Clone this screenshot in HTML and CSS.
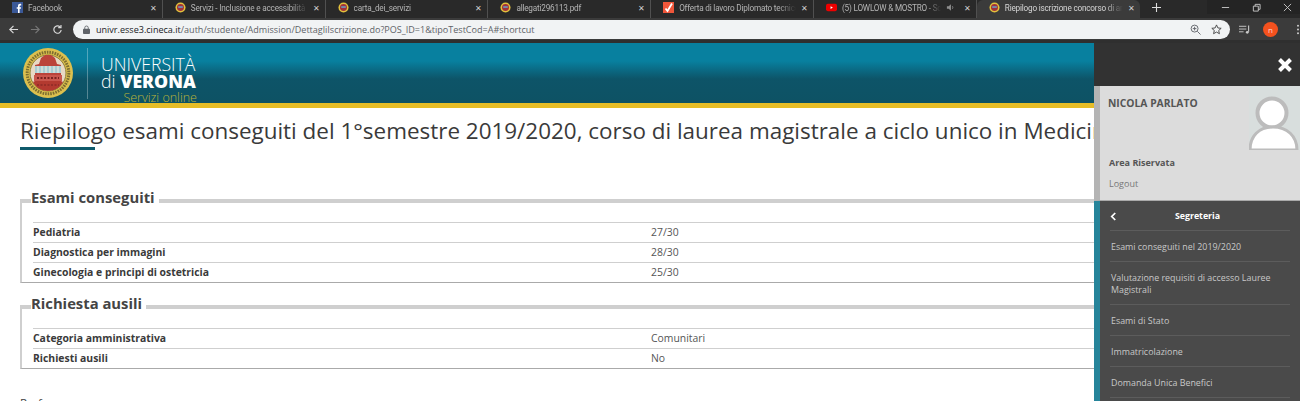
FILE: index.html
```html
<!DOCTYPE html>
<html lang="it">
<head>
<meta charset="utf-8">
<title>Riepilogo iscrizione concorso</title>
<link rel="stylesheet" href="styles.css">
</head>
<body>
<div class="tabbar">
  <div class="tab">
    <svg class="fav" viewBox="0 0 11 11"><rect width="11" height="11" fill="#3b5998"/><path d="M7.6 11V6.8h1.3l.2-1.6H7.6v-1c0-.5.2-.8.8-.8h.8V1.900C9 1.900 8.600 1.800 8 1.800c-1.200 0-2 .7-2 2.100v1.300H4.700v1.600H6V11z" fill="#fff"/></svg>
    <span class="tab-t">Facebook</span><span class="tab-x">✕</span>
  </div>
  <div class="tab">
    <svg class="fav" viewBox="0 0 12 12"><circle cx="6" cy="6" r="5.500" fill="#e3c23c"/><circle cx="6" cy="6" r="3.800" fill="#a2313a"/><rect x="3.500" y="4.500" width="5" height="2" fill="#6f8fb0"/></svg>
    <span class="tab-t">Servizi - Inclusione e accessibilità</span><span class="tab-x">✕</span>
  </div>
  <div class="tab">
    <svg class="fav" viewBox="0 0 12 12"><circle cx="6" cy="6" r="5.500" fill="#e3c23c"/><circle cx="6" cy="6" r="3.800" fill="#a2313a"/><rect x="3.500" y="4.500" width="5" height="2" fill="#6f8fb0"/></svg>
    <span class="tab-t">carta_dei_servizi</span><span class="tab-x">✕</span>
  </div>
  <div class="tab">
    <svg class="fav" viewBox="0 0 12 12"><circle cx="6" cy="6" r="5.500" fill="#e3c23c"/><circle cx="6" cy="6" r="3.800" fill="#a2313a"/><rect x="3.500" y="4.500" width="5" height="2" fill="#6f8fb0"/></svg>
    <span class="tab-t">allegati296113.pdf</span><span class="tab-x">✕</span>
  </div>
  <div class="tab">
    <svg class="fav" viewBox="0 0 11 11"><rect width="11" height="11" fill="#f0563a"/><path d="M2.500 6.500l2 2.500L9 1.500" fill="none" stroke="#fff" stroke-width="1.800"/></svg>
    <span class="tab-t">Offerta di lavoro Diplomato tecnico</span><span class="tab-x">✕</span>
  </div>
  <div class="tab">
    <svg class="fav" viewBox="0 0 12 12"><rect y="2" width="12" height="8" rx="2" fill="#e00"/><path d="M5 4.500v3L7.500 6z" fill="#fff"/></svg>
    <span class="tab-t">(5) LOWLOW &amp; MOSTRO - Sole</span>
    <svg class="spk" viewBox="0 0 10 10"><path d="M1 3.500h2L5.500 1.500v7L3 6.500H1z" fill="#8d8d8d"/><path d="M7 3.500c.8 1 .8 2 0 3" fill="none" stroke="#8d8d8d"/></svg>
    <span class="tab-x">✕</span>
  </div>
  <div class="tab tab-active">
    <svg class="fav" viewBox="0 0 12 12"><circle cx="6" cy="6" r="5.500" fill="#e3c23c"/><circle cx="6" cy="6" r="3.800" fill="#a2313a"/><rect x="3.500" y="4.500" width="5" height="2" fill="#6f8fb0"/></svg>
    <span class="tab-t">Riepilogo iscrizione concorso di ammissione</span><span class="tab-x">✕</span>
  </div>
  <div class="newtab">
    <svg viewBox="0 0 10 10"><path d="M5 0v10M0 5h10" stroke="#ddd" stroke-width="1.200"/></svg>
  </div>
  <div class="winctl">
    <span class="win"><svg viewBox="0 0 10 10"><path d="M1 5h8" stroke="#ccc"/></svg></span>
    <span class="win"><svg viewBox="0 0 10 10"><path d="M1.500 3.500h5.500v5.500H1.500zM3.500 3.500V1.500H9V7H7" fill="none" stroke="#ccc"/></svg></span>
    <span class="win"><svg viewBox="0 0 10 10"><path d="M1 1l8 8M9 1l-8 8" stroke="#ccc"/></svg></span>
  </div>
</div>

<div class="toolbar">
  <svg class="nav" viewBox="0 0 12 12"><path d="M11 6H2M6 2L2 6l4 4" fill="none" stroke="#d8d8d8" stroke-width="1.300"/></svg>
  <svg class="nav nav-off" viewBox="0 0 12 12"><path d="M1 6h9M6 2l4 4-4 4" fill="none" stroke="#777" stroke-width="1.300"/></svg>
  <svg class="nav" viewBox="0 0 12 12"><path d="M10 6.500A4 4 0 1 1 8.800 3.200M9.800 1v3h-3" fill="none" stroke="#d8d8d8" stroke-width="1.300"/></svg>
  <div class="omni">
    <svg class="lock" viewBox="0 0 8 10"><rect y="4" width="8" height="6" rx="1" fill="#5f6368"/><path d="M2 4.500V3a2 2 0 0 1 4 0v1.500" fill="none" stroke="#5f6368"/></svg>
    <span class="url"><span class="url-host">univr.esse3.cineca.it</span>/auth/studente/Admission/DettagliIscrizione.do?POS_ID=1&amp;tipoTestCod=A#shortcut</span>
    <svg class="omni-ic" viewBox="0 0 12 12"><circle cx="5" cy="5" r="3.800" fill="none" stroke="#5f6368"/><path d="M8 8l3.500 3.500M3 5h4M5 3v4" stroke="#5f6368"/></svg>
    <svg class="omni-ic" viewBox="0 0 12 12"><path d="M6 1l1.500 3.300 3.600.4-2.700 2.400.8 3.500L6 8.800l-3.200 1.800.8-3.500L.9 4.700l3.600-.4z" fill="none" stroke="#444"/></svg>
  </div>
  <div class="tools">
    <svg class="tool" viewBox="0 0 12 12"><path d="M0 2.500h8M0 5.500h8M0 8.500h5" stroke="#ccc"/><path d="M10.500 1.500v7" stroke="#ccc" stroke-width="1.200"/><circle cx="9" cy="9" r="1.500" fill="#ccc"/></svg>
    <span class="avatar">n</span>
    <svg class="dots" viewBox="0 0 4 12"><circle cx="2" cy="2" r="1.100" fill="#ccc"/><circle cx="2" cy="6" r="1.100" fill="#ccc"/><circle cx="2" cy="10" r="1.100" fill="#ccc"/></svg>
  </div>
</div>

<div class="page">
  <header class="hero">
    <svg class="seal" viewBox="0 0 50 50">
      <circle cx="25" cy="25" r="25" fill="#dcc04e"/>
      <circle cx="25" cy="25" r="20.800" fill="none" stroke="#7d6e30" stroke-width="3" stroke-dasharray="1.600 1"/>
      <circle cx="25" cy="25" r="18" fill="#e8d9c4" stroke="#8f7f33"/>
      <path d="M10 34c4-3 26-3 30 0-3 6-9 9-15 9s-12-3-15-9z" fill="#b33a30"/>
      <path d="M12 27V17l4-1 2-6 4-3 6 0 4 3 2 6 4 1v10z" fill="#bb443a"/>
      <rect x="12" y="18" width="26" height="7" fill="#a9cdd2"/>
      <path d="M15 18v7M19 18v7M23 18v7M27 18v7M31 18v7M35 18v7" stroke="#f2efe0"/>
      <path d="M11 27h28v6H11z" fill="#c9574d"/>
      <path d="M14 30h22" stroke="#7a2320" stroke-width="2" stroke-dasharray="2 1.500"/>
      <path d="M14 37h22" stroke="#7a2320" stroke-dasharray="2 1.500"/>
    </svg>
    <span class="logo-sep"></span>
    <div class="logo">
      <div class="logo-l1">UNIVERSITÀ</div>
      <div class="logo-l2">di <b>VERONA</b></div>
      <div class="logo-l3">Servizi online</div>
    </div>
  </header>

  <main class="content">
    <h1 class="title">Riepilogo esami conseguiti del 1°semestre 2019/2020, corso di laurea magistrale a ciclo unico in Medicina e Chirurgia</h1>

    <fieldset class="box box-first">
      <legend>Esami conseguiti</legend>
      <table>
        <tr><th>Pediatria</th><td>27/30</td></tr>
        <tr><th>Diagnostica per immagini</th><td>28/30</td></tr>
        <tr><th>Ginecologia e principi di ostetricia</th><td>25/30</td></tr>
      </table>
    </fieldset>

    <fieldset class="box box-second">
      <legend>Richiesta ausili</legend>
      <table>
        <tr><th>Categoria amministrativa</th><td>Comunitari</td></tr>
        <tr><th>Richiesti ausili</th><td>No</td></tr>
      </table>
    </fieldset>

    <p class="after">Preferenze</p>
  </main>

  <aside class="drawer">
    <div class="drawer-top">
      <svg class="close" viewBox="0 0 16 16"><path d="M2.500 2.500l11 11M13.500 2.500l-11 11" stroke="#fff" stroke-width="4"/></svg>
    </div>
    <div class="user">
      <div class="user-info">
        <div class="user-name">NICOLA PARLATO</div>
        <div class="user-area">Area Riservata</div>
        <div class="user-logout">Logout</div>
      </div>
      <svg class="user-pic" viewBox="0 0 51 64">
        <rect width="51" height="64" fill="#d8dedd"/>
        <circle cx="23" cy="27" r="14.500" fill="#fff" stroke="#bcbcbc" stroke-width="4"/>
        <path d="M1 64c0-14 9-23 23-23s24 9 24 23z" fill="#fff" stroke="#bcbcbc" stroke-width="3"/>
      </svg>
    </div>
    <nav class="menu">
      <div class="menu-head">
        <svg class="back" viewBox="0 0 8 10"><path d="M6 1L2 5l4 4" fill="none" stroke="#fff" stroke-width="2"/></svg>
        <span>Segreteria</span>
      </div>
      <a class="menu-item">Esami conseguiti nel 2019/2020</a>
      <a class="menu-item">Valutazione requisiti di accesso Lauree Magistrali</a>
      <a class="menu-item">Esami di Stato</a>
      <a class="menu-item">Immatricolazione</a>
      <a class="menu-item">Domanda Unica Benefici</a>
    </nav>
  </aside>
</div>
</body>
</html>
```

FILE: styles.css
```css
* { box-sizing: border-box; }
html, body { margin: 0; height: 401px; overflow: hidden; background: #fff; }
body { font-family: "Open Sans", sans-serif; color: #444; }

/* browser chrome */
.tabbar { display: flex; height: 18px; background: #292929; position: relative; }
.tab { flex: 0 0 162.8px; min-width: 0; height: 18px; display: flex; align-items: center; padding: 0 4px 3px 12px; gap: 5px; border-right: 1px solid #505050; color: #b4b4b4; }
.tab-active { background: #3b3b3b; border-right: 0; border-radius: 6px 6px 0 0; color: #d4d4d4; }
.fav { width: 11px; height: 11px; flex: none; }
.tab-t { flex: 1; min-width: 0; font-family: Roboto, sans-serif; font-size: 8.200px; letter-spacing: -.2px; white-space: nowrap; overflow: hidden; -webkit-mask-image: linear-gradient(90deg, #000 85%, transparent); mask-image: linear-gradient(90deg, #000 85%, transparent); }
.tab-x { font-size: 8px; width: 8px; line-height: 1; color: #d0d0d0; }
.spk { width: 9px; height: 9px; flex: none; margin-right: 4px; }
.newtab { width: 20px; height: 18px; margin-left: 7px; padding-bottom: 3px; display: flex; align-items: center; justify-content: center; }
.newtab svg { width: 9px; height: 9px; }
.winctl { margin-left: auto; display: flex; height: 14px; background: #242424; }
.win { width: 31px; padding-left: 5px; display: flex; align-items: center; justify-content: center; }
.win svg { width: 9px; height: 9px; }

.toolbar { display: flex; align-items: center; height: 25px; background: #3b3b3b; border-bottom: 3px solid #2f2f2f; padding: 0 0 0 8px; }
.nav { width: 11px; height: 11px; margin-right: 11px; }
.omni { margin-left: -1px; width: 1158px; height: 19px; background: #f1f3f4; border-radius: 10px; display: flex; align-items: center; padding: 0 8px 0 10px; }
.lock { width: 7px; height: 9px; flex: none; margin-right: 6px; }
.url { flex: 1; font-size: 9.050px; color: #5f6368; white-space: nowrap; }
.url-host { color: #202124; }
.omni-ic { width: 11px; height: 11px; margin-left: 10px; }
.tools { flex: 1; display: flex; align-items: center; padding-left: 9px; }
.tool { width: 11px; height: 11px; }
.avatar { width: 15px; height: 15px; margin-left: 13px; border-radius: 50%; background: #f4511e; color: #ffd9cc; font-size: 8px; display: flex; align-items: center; justify-content: center; }
.dots { width: 4px; height: 11px; margin-left: 18px; }

/* page */
.page { position: relative; height: 358px; overflow: hidden; }
.hero { height: 65px; display: flex; align-items: flex-start; padding: 5px 0 0 23px; border-bottom: 5px solid #e6bd27; background: linear-gradient(#08809f 0, #08809f 30%, #0d5468 60%, #0d5264 100%); overflow: hidden; }
.seal { width: 50px; height: 50px; flex: none; }
.logo-sep { width: 1px; height: 51px; margin-left: 14px; background: rgba(255,255,255,.3); flex: none; }
.logo { margin-left: 13px; color: #fff; padding-top: 9px; width: 96px; }
.logo-l1 { font-size: 17.700px; line-height: 15px; font-weight: 300; white-space: nowrap; }
.logo-l2 { font-size: 17.700px; line-height: 19px; font-weight: 300; white-space: nowrap; }
.logo-l2 b { font-weight: 800; }
.logo-l3 { font-size: 12.500px; line-height: 15px; margin-top: -1px; text-align: right; color: #b9b239; font-weight: 300; white-space: nowrap; }

.content { padding: 8px 0 0 20px; }
.title { margin: 0; width: 1500px; height: 30px; font-size: 22.450px; line-height: 30px; font-weight: 400; color: #3a3a3a; white-space: nowrap; position: relative; }
.title::after { content: ""; position: absolute; left: 0; top: 31px; width: 75px; height: 3px; background: #0f5a6b; }
.box { margin: 0; padding: 7px 0 0 11px; min-width: 0; width: 1300px; border: 0 solid #cfcfcf; border-width: 4px 0 1px 2px; border-bottom-color: #aaa; }
.box-first { margin-top: 41px; height: 96px; }
.box-second { margin-top: 10px; height: 76px; }
.box legend { padding: 0 4px 8px 0; margin-left: -2px; font-size: 14.800px; line-height: 20px; font-weight: 700; color: #444; }
.box table { width: 1240px; border-collapse: collapse; font-size: 10.400px; table-layout: fixed; }
.box th, .box td { height: 20px; padding: 0 0 1px; border-top: 1px solid #cfcfcf; text-align: left; white-space: nowrap; }
.box th { width: 618px; font-weight: 700; color: #3a3a3a; }
.box td { font-weight: 400; color: #555; }
.after { margin: 26px 0 0; font-size: 11.500px; color: #444; }

/* drawer */
.drawer { position: absolute; top: 0; right: 0; width: 206px; height: 358px; background: #4a4a4a; display: flex; flex-direction: column; }
.drawer-top { height: 43px; flex: none; background: #323232; display: flex; align-items: center; justify-content: flex-end; padding: 0 7px 0 0; }
.close { width: 16px; height: 16px; }
.user { height: 115px; flex: none; display: flex; background: #dcdcdc; border-left: 6px solid #b4b4b4; border-bottom: 1px solid #aaa; align-items: flex-start; }
.user-info { flex: 1; padding: 10px 0 0 8px; }
.user-name { font-size: 10.300px; line-height: 15px; font-weight: 700; color: #555; }
.user-area { margin-top: 46px; padding-left: 1px; font-size: 9px; line-height: 12px; font-weight: 700; color: #555; }
.user-logout { margin-top: 9px; padding-left: 1px; font-size: 9px; line-height: 12px; color: #777; }
.user-pic { width: 51px; height: 64px; display: block; flex: none; }
.menu { flex: 1; background: #4a4a4a; border-left: 6px solid #26849a; padding: 0 10px; }
.menu-head { height: 30px; position: relative; display: flex; align-items: center; justify-content: center; border-bottom: 1px solid #5c5c5c; color: #fff; font-size: 8.800px; font-weight: 700; padding-right: 5px; }
.back { position: absolute; left: 0; top: 11px; width: 7px; height: 9px; }
.menu-item { display: block; padding: 10px 0 8px 1px; font-size: 8.900px; line-height: 12px; color: #c8c8c8; border-bottom: 1px solid #5c5c5c; }
```
